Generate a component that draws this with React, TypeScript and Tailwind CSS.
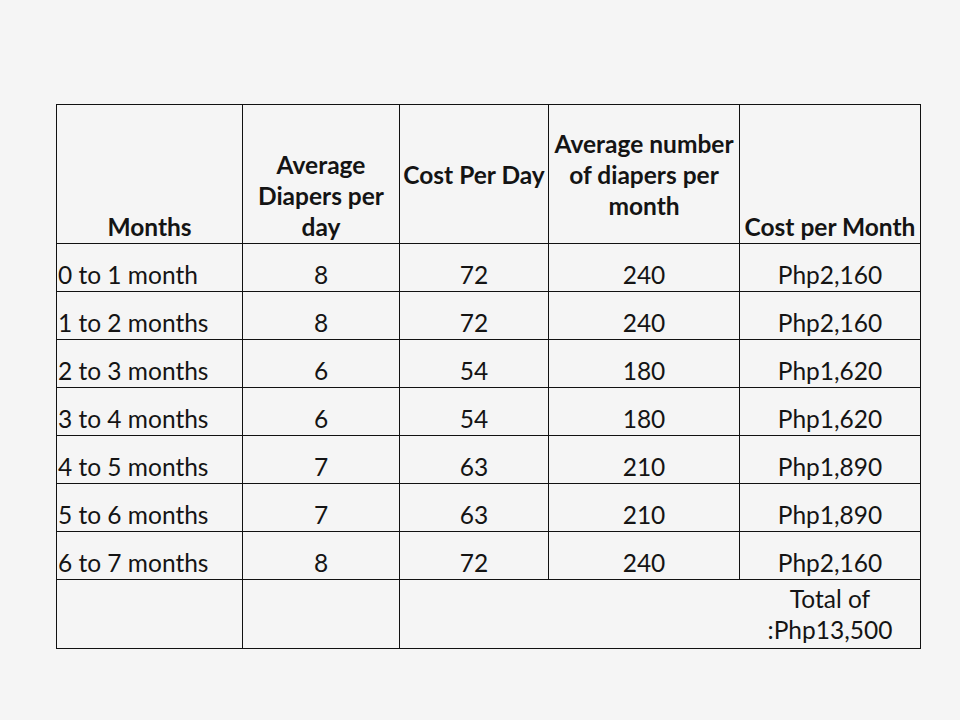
import React from "react";

const rows = [
  ["0 to 1 month", "8", "72", "240", "Php2,160"],
  ["1 to 2 months", "8", "72", "240", "Php2,160"],
  ["2 to 3 months", "6", "54", "180", "Php1,620"],
  ["3 to 4 months", "6", "54", "180", "Php1,620"],
  ["4 to 5 months", "7", "63", "210", "Php1,890"],
  ["5 to 6 months", "7", "63", "210", "Php1,890"],
  ["6 to 7 months", "8", "72", "240", "Php2,160"],
];

export default function App() {
  const cell = "bg-[#f5f5f5]";
  return (
    <div
      className="w-[960px] h-[720px] bg-[#f5f5f5] pt-[104px] pl-[56px] text-[#141414]"
      style={{ fontFamily: "Lato, 'Open Sans', sans-serif" }}
    >
      <div className="inline-grid grid-cols-[185px_156px_148px_190px_180px] grid-rows-[138px_repeat(7,47px)_68px] gap-px bg-[#111] border border-[#111]">
        <div className={`${cell} flex items-end justify-center pb-[1px] font-bold text-[24.5px] leading-[31px]`}>Months</div>
        <div className={`${cell} flex items-end justify-center pb-[1px] font-bold text-[24.5px] leading-[31px] text-center`}>
          <span>
            Average
            <br />
            Diapers per
            <br />
            day
          </span>
        </div>
        <div className={`${cell} flex items-center justify-center font-bold text-[24.5px] leading-[31px] text-center`}>Cost Per Day</div>
        <div className={`${cell} flex items-center justify-center font-bold text-[24.5px] leading-[31px] text-center`}>
          <span>
            Average number
            <br />
            of diapers per
            <br />
            month
          </span>
        </div>
        <div className={`${cell} flex items-end justify-center pb-[1px] font-bold text-[24.5px] leading-[31px] whitespace-nowrap`}>Cost per Month</div>
        {rows.map((r, i) => (
          <React.Fragment key={i}>
            <div className={`${cell} flex items-end pb-[1px] pl-px text-[24.5px] leading-[31px]`}>{r[0]}</div>
            {r.slice(1).map((v, j) => (
              <div key={j} className={`${cell} flex items-end justify-center pb-[1px] text-[24.5px] leading-[31px]`}>
                {v}
              </div>
            ))}
          </React.Fragment>
        ))}
        <div className={cell}></div>
        <div className={cell}></div>
        <div className={`${cell} col-span-3 flex justify-end`}>
          <div className="w-[180px] flex flex-col items-center text-[24.5px] leading-[31px] pt-[3px]">
            <span>Total of</span>
            <span>:Php13,500</span>
          </div>
        </div>
      </div>
    </div>
  );
}
